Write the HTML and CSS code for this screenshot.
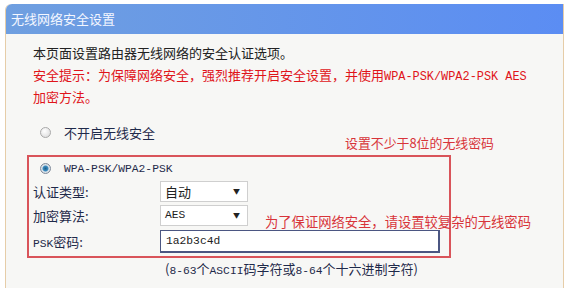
FILE: index.html
```html
<!DOCTYPE html>
<html lang="zh-CN">
    <head>
        <meta charset="UTF-8">
        <meta name="viewport" content="width=device-width, initial-scale=1.0">
        <title>无线网络安全设置</title>
        <link rel="stylesheet" href="styles.css">
    </head>
    <body>
        <div class="panel">
            <div class="header">无线网络安全设置</div>
            <div class="content">
                <p class="line">本页面设置路由器无线网络的安全认证选项。</p>
                <p class="line warn">安全提示：为保障网络安全，强烈推荐开启安全设置，并使用<span class="mono-wide">WPA-PSK/WPA2-PSK AES</span></p>
                <p class="line warn">加密方法。</p>

                <div class="radio-row first">
                    <span class="radio"></span>
                    <span>不开启无线安全</span>
                </div>

                <div class="mark-box">
                    <div class="radio-row">
                        <span class="radio checked"></span>
                        <span class="mono">WPA-PSK/WPA2-PSK</span>
                    </div>
                    <div class="field">
                        <span class="label">认证类型:</span>
                        <div class="select"><span>自动</span><span class="arrow">▼</span></div>
                    </div>
                    <div class="field">
                        <span class="label">加密算法:</span>
                        <div class="select"><span class="mono">AES</span><span class="arrow">▼</span></div>
                    </div>
                    <div class="field psk">
                        <span class="label"><span class="mono">PSK</span>密码:</span>
                        <div class="input"><span class="mono">1a2b3c4d</span></div>
                    </div>
                </div>

                <p class="hint">(<span class="mono">8-63</span>个<span class="mono">ASCII</span>码字符或<span class="mono">8-64</span>个十六进制字符)</p>
            </div>

            <!-- annotations drawn over the form -->
            <div class="note note-top">设置不少于8位的无线密码</div>
            <div class="note note-mid">为了保证网络安全，请设置较复杂的无线密码</div>
        </div>
    </body>
</html>
```

FILE: styles.css
```css
body {
    margin: 0;
    background-color: #ffffff;
    font-family: "Noto Sans CJK SC", sans-serif;
    font-size: 13px;
    color: #222222;
    overflow: hidden;
}

.panel {
    position: relative;
    margin: 4px 0 0 5px;
    width: 557px;
    height: 290px;
    background-color: #f7f7f5;
    border-left: 1px solid #e6cda8;
    border-right: 1px solid #e6cda8;
    border-radius: 6px 0 0 0;
}

.header {
    height: 30px;
    line-height: 29px;
    padding-left: 5px;
    color: #f4f7ff;
    background: linear-gradient(to right, #6f9fe0, #5b8df3);
    border-radius: 6px 0 0 0;
}

.content {
    padding: 8px 0 0 27px;
}

.line {
    margin: 0;
    height: 22px;
    line-height: 22px;
}

.warn {
    color: #e0141a;
}

.mono,
.mono-wide {
    font-family: "Liberation Mono", monospace;
    font-size: 11.3px;
}

.mono-wide {
    font-size: 11.9px;
}

.radio-row {
    display: flex;
    align-items: center;
    height: 21px;
    color: #1f2a4a;
}

.radio-row.first {
    margin-top: 13px;
    height: 22px;
}

.radio {
    width: 11px;
    height: 11px;
    margin: 0 13px 0 7px;
    border-radius: 50%;
    border: 1px solid #a9a9a9;
    background: radial-gradient(circle at 40% 35%, #ffffff, #d6d6d6);
    box-sizing: border-box;
    flex-shrink: 0;
}

.radio.checked {
    border-color: #7f8a9a;
    background: radial-gradient(circle, #1d5f8a 0, #3c8cc0 2.5px, #dfe6ec 3.5px, #c9cfd6 6px);
}

.mark-box {
    margin: 12px 0 0 -6px;
    width: 416px;
    padding: 1px 0 3px 4px;
    border: 2px solid #d9545a;
}

.field {
    display: flex;
    align-items: center;
    height: 24px;
    color: #1f2a4a;
}

.field.psk {
    margin-top: 2px;
}

.label {
    width: 127px;
    flex-shrink: 0;
}

.select {
    display: flex;
    align-items: center;
    justify-content: space-between;
    width: 88px;
    height: 21px;
    padding: 0 7px 0 4px;
    box-sizing: border-box;
    background-color: #ffffff;
    border: 1px solid #cfcfcf;
    color: #222222;
}

.arrow {
    font-size: 7px;
    color: #222222;
}

.input {
    display: flex;
    align-items: center;
    width: 280px;
    height: 23px;
    padding-left: 5px;
    box-sizing: border-box;
    background-color: #ffffff;
    border: 1px solid #4b5682;
    border-right-width: 2px;
    border-bottom-width: 2px;
    color: #222222;
}

.hint {
    margin: 0;
    padding-left: 132px;
    height: 22px;
    line-height: 22px;
    color: #1f2a4a;
}

.note {
    position: absolute;
    color: #d8343a;
    font-size: 12.9px;
    white-space: nowrap;
}

.note-top {
    left: 339px;
    top: 129px;
}

.note-mid {
    left: 259px;
    top: 208px;
    font-size: 13.3px;
}
```
